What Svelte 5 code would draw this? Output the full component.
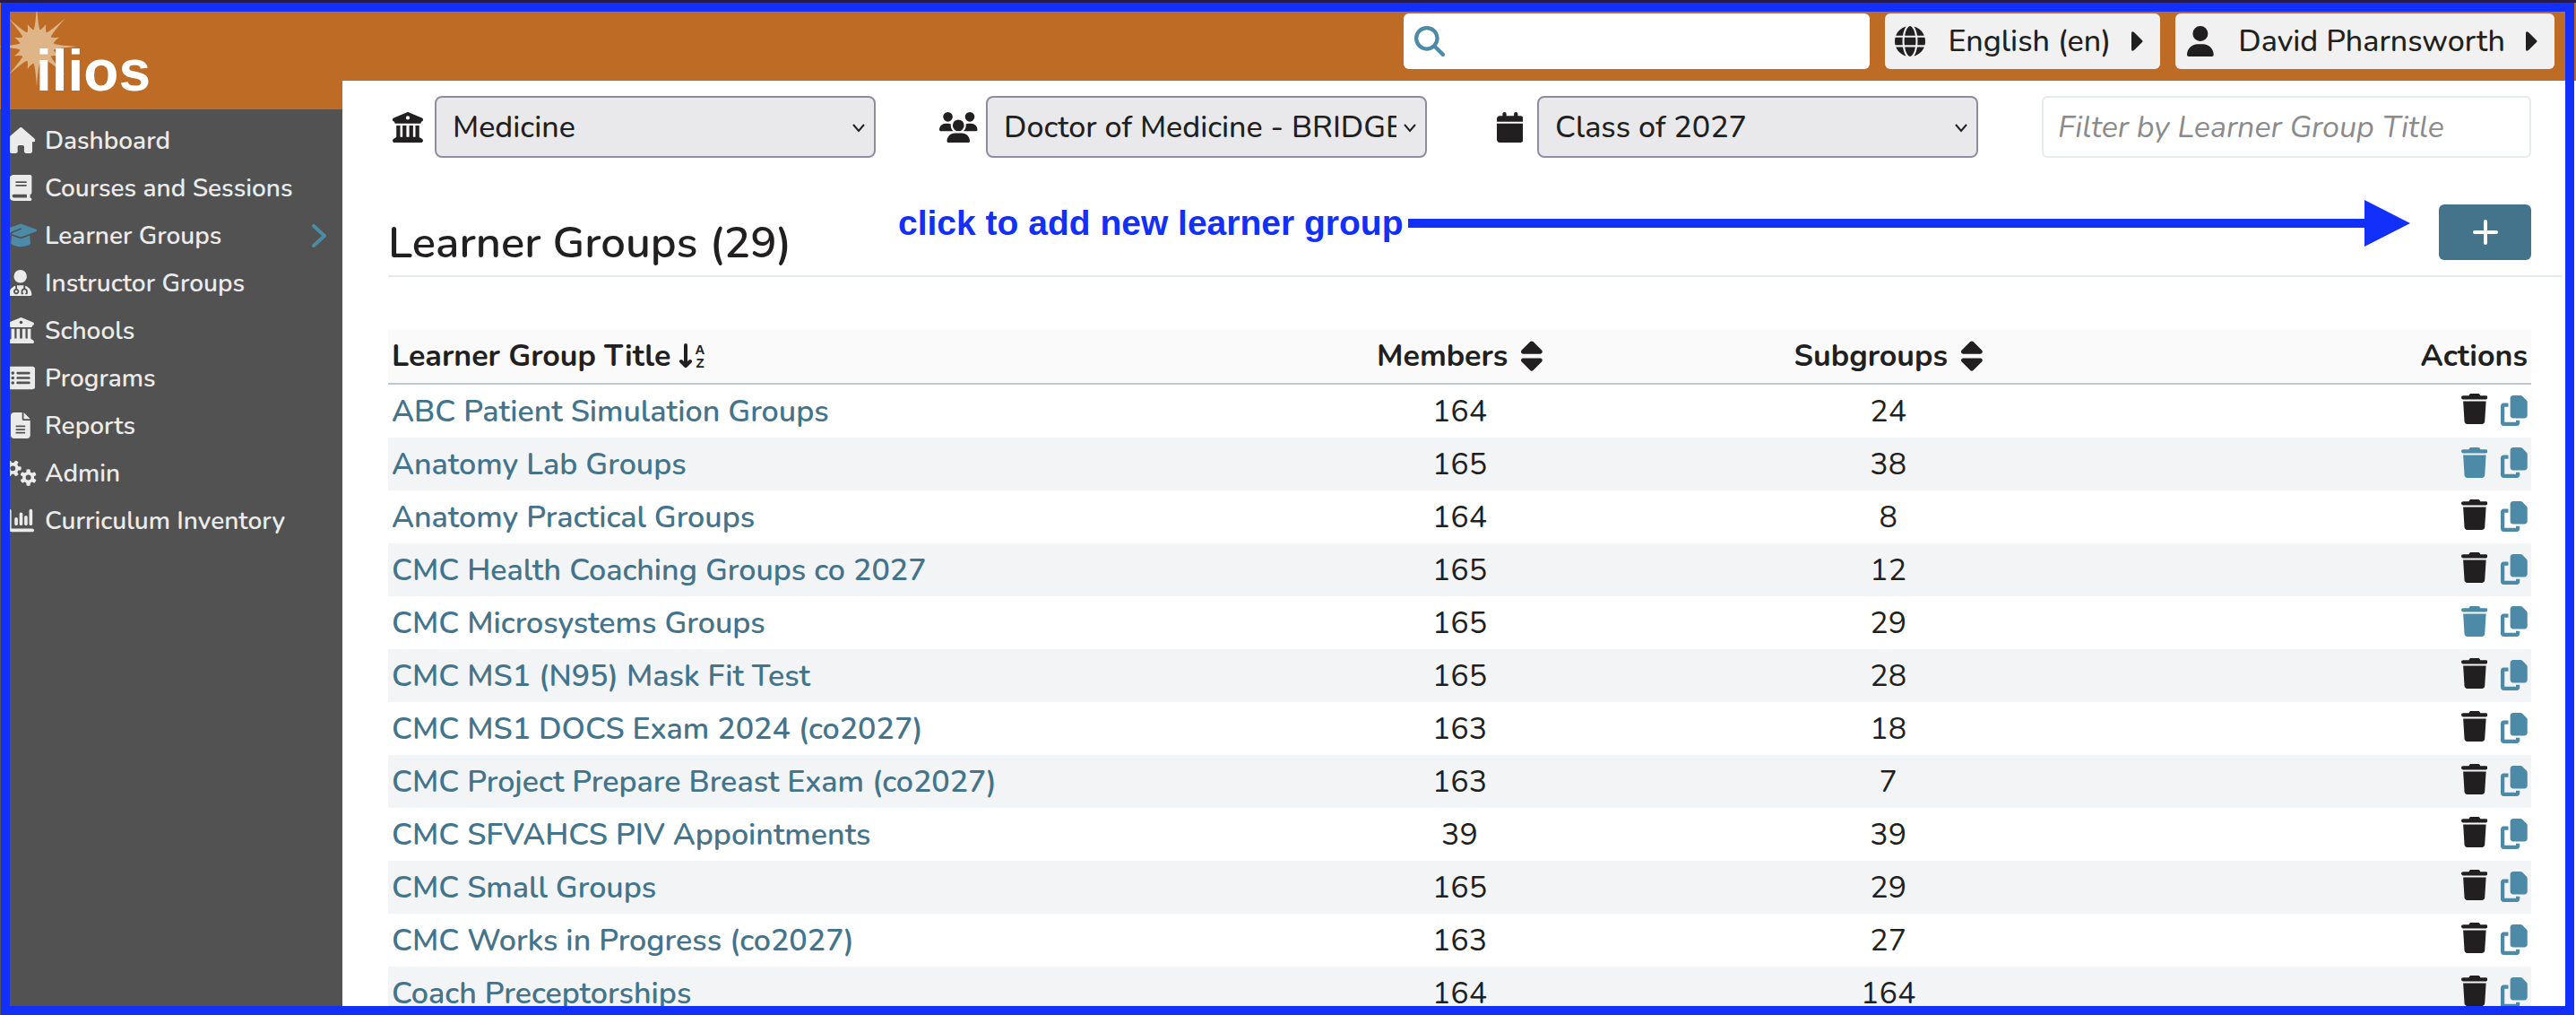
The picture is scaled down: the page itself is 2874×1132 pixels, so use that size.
<script>
  const icons = {
    home: [576, 'M575.8 255.5c0 18-15 32.1-32 32.1h-32l.7 160.2c0 2.7-.2 5.4-.5 8.1V472c0 22.1-17.9 40-40 40H456c-1.1 0-2.2 0-3.3-.1c-1.4 .1-2.8 .1-4.2 .1H416 392c-22.1 0-40-17.9-40-40V448 384c0-17.7-14.3-32-32-32H256c-17.7 0-32 14.3-32 32v64 24c0 22.1-17.9 40-40 40H160 128.1c-1.5 0-3-.1-4.5-.2c-1.2 .1-2.4 .2-3.6 .2H104c-22.1 0-40-17.9-40-40V360c0-.9 0-1.9 .1-2.8V287.6H32c-18 0-32-14-32-32.1c0-9 3-17 10-24L266.4 8c7-7 15-8 22-8s15 2 21 7L564.8 231.5c8 7 12 15 11 24z'],
    book: [448, 'M96 0C43 0 0 43 0 96V416c0 53 43 96 96 96H384h32c17.7 0 32-14.3 32-32s-14.3-32-32-32V384c17.7 0 32-14.3 32-32V32c0-17.7-14.3-32-32-32H384 96zm0 384H352v64H96c-17.7 0-32-14.3-32-32s14.3-32 32-32zm32-240c0-8.8 7.2-16 16-16H336c8.8 0 16 7.2 16 16s-7.2 16-16 16H144c-8.8 0-16-7.2-16-16zm16 48H336c8.8 0 16 7.2 16 16s-7.2 16-16 16H144c-8.8 0-16-7.2-16-16s7.2-16 16-16z'],
    cap: [640, 'M320 32c-8.1 0-16.1 1.4-23.7 4.1L15.8 137.4C6.3 140.9 0 149.9 0 160s6.3 19.1 15.8 22.6l57.9 20.9C57.3 229.3 48 259.8 48 291.9v28.1c0 28.4-10.8 57.7-22.3 80.8c-6.5 13-13.9 25.8-22.5 37.6C0 442.7-.9 448.3 .9 453.4s6 8.9 11.2 10.2l64 16c4.2 1.1 8.7 .3 12.4-2s6.3-6.1 7.1-10.4c8.6-42.8 4.3-81.2-2.1-108.7C90.3 344.3 86 329.8 80 316.5V291.9c0-30.2 10.2-58.7 27.9-81.5c12.9-15.5 29.6-28 49.2-35.7l157-61.7c8.2-3.2 17.5 .8 20.7 9s-.8 17.5-9 20.7l-157 61.7c-12.4 4.9-23.3 12.4-32.2 21.6l159.6 57.6c7.6 2.7 15.6 4.1 23.7 4.1s16.1-1.4 23.7-4.1L624.2 182.6c9.5-3.4 15.8-12.5 15.8-22.6s-6.3-19.1-15.8-22.6L343.7 36.1C336.1 33.4 328.1 32 320 32zM128 408c0 35.3 86 72 192 72s192-36.7 192-72L496.7 262.6 354.5 314c-11.1 4-22.8 6-34.5 6s-23.5-2-34.5-6L143.3 262.6 128 408z'],
    doctor: [448, 'M224 256a128 128 0 1 0 0-256 128 128 0 1 0 0 256zm-96 55.2C54 332.9 0 401.3 0 482.3C0 498.7 13.3 512 29.7 512H418.3c16.4 0 29.7-13.3 29.7-29.7c0-81-54-149.4-128-171.1V362c27.6 7.1 48 32.2 48 62v40c0 8.8-7.2 16-16 16H336c-8.8 0-16-7.2-16-16s7.2-16 16-16V424c0-17.7-14.3-32-32-32s-32 14.3-32 32v24c8.8 0 16 7.2 16 16s-7.2 16-16 16H256c-8.8 0-16-7.2-16-16V424c0-29.8 20.4-54.9 48-62V304.9c-6-.6-12.1-.9-18.3-.9H178.3c-6.2 0-12.3 .3-18.3 .9v65.4c23.1 6.9 40 28.3 40 53.7c0 30.9-25.1 56-56 56s-56-25.1-56-56c0-25.4 16.9-46.8 40-53.7V311.2zM144 448a24 24 0 1 0 0-48 24 24 0 1 0 0 48z'],
    school: [512, 'M243.4 2.6l-224 96c-14 6-21.8 21-18.7 35.8S16.8 160 32 160v8c0 13.3 10.7 24 24 24H456c13.3 0 24-10.7 24-24v-8c15.2 0 28.3-10.7 31.3-25.6s-4.8-29.9-18.7-35.8l-224-96c-8-3.4-17.2-3.4-25.2 0zM128 224H64V420.3c-.6 .3-1.2 .7-1.8 1.1l-48 32c-11.7 7.8-17 22.4-12.9 35.9S17.9 512 32 512H480c14.1 0 26.5-9.2 30.6-22.7s-1.1-28.1-12.9-35.9l-48-32c-.6-.4-1.2-.7-1.8-1.1V224H384V416H344V224H280V416H232V224H168V416H128V224zM256 64a32 32 0 1 1 0 64 32 32 0 1 1 0-64z'],
    list: [576, 'M0 96C0 60.7 28.7 32 64 32H512c35.3 0 64 28.7 64 64V416c0 35.3-28.7 64-64 64H64c-35.3 0-64-28.7-64-64V96zM128 288a32 32 0 1 0 0-64 32 32 0 1 0 0 64zm32-128a32 32 0 1 0 -64 0 32 32 0 1 0 64 0zM128 384a32 32 0 1 0 0-64 32 32 0 1 0 0 64zm96-248c-13.3 0-24 10.7-24 24s10.7 24 24 24H448c13.3 0 24-10.7 24-24s-10.7-24-24-24H224zm0 96c-13.3 0-24 10.7-24 24s10.7 24 24 24H448c13.3 0 24-10.7 24-24s-10.7-24-24-24H224zm0 96c-13.3 0-24 10.7-24 24s10.7 24 24 24H448c13.3 0 24-10.7 24-24s-10.7-24-24-24H224z'],
    file: [384, 'M64 0C28.7 0 0 28.7 0 64V448c0 35.3 28.7 64 64 64H320c35.3 0 64-28.7 64-64V160H256c-17.7 0-32-14.3-32-32V0H64zM256 0V128H384L256 0zM112 256H272c8.8 0 16 7.2 16 16s-7.2 16-16 16H112c-8.8 0-16-7.2-16-16s7.2-16 16-16zm0 64H272c8.8 0 16 7.2 16 16s-7.2 16-16 16H112c-8.8 0-16-7.2-16-16s7.2-16 16-16zm0 64H272c8.8 0 16 7.2 16 16s-7.2 16-16 16H112c-8.8 0-16-7.2-16-16s7.2-16 16-16z'],
    gears: [640, gear(165, 165, 0) + gear(470, 345, Math.PI / 6)],
    chart: [512, 'M32 32c17.7 0 32 14.3 32 32V400c0 8.8 7.2 16 16 16H480c17.7 0 32 14.3 32 32s-14.3 32-32 32H80c-44.2 0-80-35.8-80-80V64C0 46.3 14.3 32 32 32zM160 192c17.7 0 32 14.3 32 32v96c0 17.7-14.3 32-32 32s-32-14.3-32-32V224c0-17.7 14.3-32 32-32zm128-64V320c0 17.7-14.3 32-32 32s-32-14.3-32-32V128c0-17.7 14.3-32 32-32s32 14.3 32 32zm64 32c17.7 0 32 14.3 32 32v128c0 17.7-14.3 32-32 32s-32-14.3-32-32V192c0-17.7 14.3-32 32-32zM480 64V320c0 17.7-14.3 32-32 32s-32-14.3-32-32V64c0-17.7 14.3-32 32-32s32 14.3 32 32z'],
    search: [512, 'M416 208c0 45.9-14.9 88.3-40 122.7L502.6 457.4c12.5 12.5 12.5 32.8 0 45.3s-32.8 12.5-45.3 0L330.7 376c-34.4 25.2-76.8 40-122.7 40C93.1 416 0 322.9 0 208S93.1 0 208 0S416 93.1 416 208zM208 352a144 144 0 1 0 0-288 144 144 0 1 0 0 288z'],
    globe: [512, 'M352 256c0 22.2-1.2 43.6-3.3 64H163.3c-2.2-20.4-3.3-41.8-3.3-64s1.2-43.6 3.3-64H348.7c2.2 20.4 3.3 41.8 3.3 64zm28.8-64H503.9c5.3 20.5 8.1 41.9 8.1 64s-2.8 43.5-8.1 64H380.8c2.1-20.6 3.2-42 3.2-64s-1.1-43.4-3.2-64zm112.6-32H376.7c-10-63.9-29.8-117.4-55.3-151.6c78.3 20.7 142 77.5 171.9 151.6zm-149.1 0H167.7c6.1-36.4 15.5-68.6 27-94.7c10.5-23.6 22.2-40.7 33.5-51.5C239.4 3.2 248.7 0 256 0s16.6 3.2 27.8 13.8c11.3 10.8 23 27.9 33.5 51.5c11.6 26 20.9 58.2 27 94.7zm-209 0H18.6C48.6 85.9 112.2 29.1 190.6 8.4C165.1 42.6 145.3 96.1 135.3 160zM8.1 192H131.2c-2.1 20.6-3.2 42-3.2 64s1.1 43.4 3.2 64H8.1C2.8 299.5 0 278.1 0 256s2.8-43.5 8.1-64zM194.7 446.6c-11.6-26-20.9-58.2-27-94.6H344.3c-6.1 36.4-15.5 68.6-27 94.6c-10.5 23.6-22.2 40.7-33.5 51.5C272.6 508.8 263.3 512 256 512s-16.6-3.2-27.8-13.8c-11.3-10.8-23-27.9-33.5-51.5zM135.3 352c10 63.9 29.8 117.4 55.3 151.6C112.2 482.9 48.6 426.1 18.6 352H135.3zm358.1 0c-30 74.1-93.6 130.9-171.9 151.6c25.5-34.2 45.2-87.7 55.3-151.6H493.4z'],
    user: [448, 'M224 256A128 128 0 1 0 224 0a128 128 0 1 0 0 256zm-45.7 48C79.8 304 0 383.8 0 482.3C0 498.7 13.3 512 29.7 512H418.3c16.4 0 29.7-13.3 29.7-29.7C448 383.8 368.2 304 269.7 304H178.3z'],
    users: [640, 'M144 0a80 80 0 1 1 0 160A80 80 0 1 1 144 0zM512 0a80 80 0 1 1 0 160A80 80 0 1 1 512 0zM0 298.7C0 239.8 47.8 192 106.7 192h42.7c15.9 0 31 3.5 44.6 9.7c-1.3 7.2-1.9 14.7-1.9 22.3c0 38.2 16.8 72.5 43.3 96c-.2 0-.4 0-.7 0H21.3C9.6 320 0 310.4 0 298.7zM405.3 320c-.2 0-.4 0-.7 0c26.6-23.5 43.3-57.8 43.3-96c0-7.6-.7-15-1.9-22.3c13.6-6.3 28.7-9.7 44.6-9.7h42.7C592.2 192 640 239.8 640 298.7c0 11.8-9.6 21.3-21.3 21.3H405.3zM224 224a96 96 0 1 1 192 0 96 96 0 1 1 -192 0zM128 485.3C128 411.7 187.7 352 261.3 352H378.7C452.3 352 512 411.7 512 485.3c0 14.7-11.9 26.7-26.7 26.7H154.7c-14.7 0-26.7-11.9-26.7-26.7z'],
    calendar: [448, 'M96 32V64H48C21.5 64 0 85.5 0 112v48H448V112c0-26.5-21.5-48-48-48H352V32c0-17.7-14.3-32-32-32s-32 14.3-32 32V64H160V32c0-17.7-14.3-32-32-32S96 14.3 96 32zM448 192H0V464c0 26.5 21.5 48 48 48H400c26.5 0 48-21.5 48-48V192z'],
    trash: [448, 'M135.2 17.7L128 32H32C14.3 32 0 46.3 0 64S14.3 96 32 96H416c17.7 0 32-14.3 32-32s-14.3-32-32-32H320l-7.2-14.3C307.4 6.8 296.3 0 284.2 0H163.8c-12.1 0-23.2 6.8-28.6 17.7zM416 128H32L53.2 467c1.6 25.3 22.6 45 47.9 45H346.9c25.3 0 46.3-19.7 47.9-45L416 128z'],
    copy: [448, 'M208 0H332.1c12.7 0 24.9 5.1 33.9 14.1l67.9 67.9c9 9 14.1 21.2 14.1 33.9V336c0 26.5-21.5 48-48 48H208c-26.5 0-48-21.5-48-48V48c0-26.5 21.5-48 48-48zM48 128h80v64H64V448H256V416h64v48c0 26.5-21.5 48-48 48H48c-26.5 0-48-21.5-48-48V176c0-26.5 21.5-48 48-48z'],
    sort: [320, 'M137.4 41.4c12.5-12.5 32.8-12.5 45.3 0l128 128c9.2 9.2 11.9 22.9 6.9 34.9s-16.6 19.8-29.6 19.8H32c-12.9 0-24.6-7.8-29.6-19.8s-2.2-25.7 6.9-34.9l128-128zm0 429.3l-128-128c-9.2-9.2-11.9-22.9-6.9-34.9s16.6-19.8 29.6-19.8H288c12.9 0 24.6 7.8 29.6 19.8s2.2 25.7-6.9 34.9l-128 128c-12.5 12.5-32.8 12.5-45.3 0z']
  };

  function polar(cx, cy, r, a) {
    return `${(cx + r * Math.cos(a)).toFixed(1)} ${(cy + r * Math.sin(a)).toFixed(1)}`;
  }

  // Six-toothed wheel with a round hole.
  function gear(cx, cy, turn) {
    const step = Math.PI / 3;
    let d = '';
    for (let i = 0; i < 6; i++) {
      const a = turn + i * step;
      d += `${i ? 'L' : 'M'}${polar(cx, cy, 115, a - 0.34)}L${polar(cx, cy, 160, a - 0.24)}`;
      d += `Q${polar(cx, cy, 176, a)} ${polar(cx, cy, 160, a + 0.24)}L${polar(cx, cy, 115, a + 0.34)}`;
    }
    return d + `ZM${cx - 52} ${cy}a52 52 0 1 0 104 0a52 52 0 1 0 -104 0z`;
  }

  // Sunburst: eight long rays with a short spike between each two.
  function burst(cx, cy) {
    let d = '';
    for (let i = 0; i < 16; i++) {
      const a = (i * Math.PI) / 8;
      const tip = i % 2 ? 27 : 45;
      const half = Math.PI / 16;
      d += `${i ? 'L' : 'M'}${polar(cx, cy, 19, a - half)}Q${polar(cx, cy, 21, a - 0.08)} ${polar(cx, cy, tip, a)}`;
      d += `Q${polar(cx, cy, 21, a + 0.08)} ${polar(cx, cy, 19, a + half)}`;
    }
    return d + 'Z';
  }

  const nav = [
    ['home', 'Dashboard'],
    ['book', 'Courses and Sessions'],
    ['cap', 'Learner Groups'],
    ['doctor', 'Instructor Groups'],
    ['school', 'Schools'],
    ['list', 'Programs'],
    ['file', 'Reports'],
    ['gears', 'Admin'],
    ['chart', 'Curriculum Inventory']
  ];

  const filters = [
    ['school', 'School', 'Medicine'],
    ['users', 'Program', 'Doctor of Medicine - BRIDGES'],
    ['calendar', 'Cohort', 'Class of 2027']
  ];

  const groups = [
    ['ABC Patient Simulation Groups', 164, 24, false],
    ['Anatomy Lab Groups', 165, 38, true],
    ['Anatomy Practical Groups', 164, 8, false],
    ['CMC Health Coaching Groups co 2027', 165, 12, false],
    ['CMC Microsystems Groups', 165, 29, true],
    ['CMC MS1 (N95) Mask Fit Test', 165, 28, false],
    ['CMC MS1 DOCS Exam 2024 (co2027)', 163, 18, false],
    ['CMC Project Prepare Breast Exam (co2027)', 163, 7, false],
    ['CMC SFVAHCS PIV Appointments', 39, 39, false],
    ['CMC Small Groups', 165, 29, false],
    ['CMC Works in Progress (co2027)', 163, 27, false],
    ['Coach Preceptorships', 164, 164, false]
  ];
</script>

{#snippet icon(name)}
  <svg class="icon" viewBox="0 0 {icons[name][0]} 512" aria-hidden="true"><path fill-rule="evenodd" d={icons[name][1]} /></svg>
{/snippet}

{#snippet caret()}
  <svg class="caret" viewBox="0 0 13 22" aria-hidden="true"><path d="M0 2Q0-1 3 1L12 10Q13 11 12 12L3 21Q0 23 0 20Z" /></svg>
{/snippet}

<div class="app">
  <aside class="sidebar">
    <a class="logo" href="#home" aria-label="ilios">
      <svg class="burst" viewBox="0 0 90 92" aria-hidden="true"><path d={burst(41, 46)} /></svg>
      <span class="wordmark">ilios</span>
    </a>
    <nav>
      {#each nav as [name, label]}
        <a class="nav-item" class:active={name === 'cap'} href="#{name}">
          <span class="nav-icon">{@render icon(name)}</span>
          <span class="nav-label">{label}</span>
          {#if name === 'cap'}
            <svg class="chevron" viewBox="0 0 16 26" aria-hidden="true"><path d="M2 2L14 13L2 24" /></svg>
          {/if}
        </a>
      {/each}
    </nav>
  </aside>

  <div class="page">
    <header>
      <label class="search">
        {@render icon('search')}
        <input type="search" aria-label="Search" />
      </label>
      <button class="menu">
        <span class="menu-icon">{@render icon('globe')}</span>
        <span>English (en)</span>
        {@render caret()}
      </button>
      <button class="menu">
        <span class="menu-icon">{@render icon('user')}</span>
        <span>David Pharnsworth</span>
        {@render caret()}
      </button>
    </header>

    <main>
      <div class="filters">
        {#each filters as [name, label, value]}
          <label class="filter">
            <span class="filter-icon">{@render icon(name)}</span>
            <span class="select-box">
              <select aria-label={label}><option>{value}</option></select>
              <svg class="drop" viewBox="0 0 16 10" aria-hidden="true"><path d="M2 1L8 8L14 1" /></svg>
            </span>
          </label>
        {/each}
        <input class="title-filter" type="text" aria-label="Filter by Learner Group Title" placeholder="Filter by Learner Group Title" />
      </div>

      <div class="title-row">
        <h2>Learner Groups (29)</h2>
        <div class="note">
          <span>click to add new learner group</span>
          <span class="shaft"></span>
          <svg class="head" viewBox="0 0 51 52" aria-hidden="true"><path d="M0 0L51 26L0 52Z" /></svg>
        </div>
        <button class="add" aria-label="Add learner group">
          <svg viewBox="0 0 28 28" aria-hidden="true"><path d="M14 2V26M2 14H26" /></svg>
        </button>
      </div>

      <table>
        <thead>
          <tr>
            <th class="name">
              <button class="sort">Learner Group Title
                <svg class="alpha" viewBox="0 0 34 38" aria-hidden="true">
                  <path d="M7 7V29M2 25L7 30L12 25" />
                  <text x="23" y="17">A</text>
                  <text x="23" y="32">Z</text>
                </svg>
              </button>
            </th>
            <th class="count"><button class="sort">Members <span class="arrows">{@render icon('sort')}</span></button></th>
            <th class="count"><button class="sort">Subgroups <span class="arrows">{@render icon('sort')}</span></button></th>
            <th class="actions">Actions</th>
          </tr>
        </thead>
        <tbody>
          {#each groups as [title, members, subgroups, removable]}
            <tr>
              <td class="name"><a href="#group">{title}</a></td>
              <td class="count">{members}</td>
              <td class="count">{subgroups}</td>
              <td class="actions">
                <div class="tools">
                  <button class="tool" class:locked={!removable} disabled={!removable} aria-label="Remove {title}">{@render icon('trash')}</button>
                  <button class="tool" aria-label="Copy {title}">{@render icon('copy')}</button>
                </div>
              </td>
            </tr>
          {/each}
        </tbody>
      </table>
    </main>
  </div>

  <div class="frame"></div>
</div>

<style>
  :global(body) {
    margin: 0;
    background: #fff;
  }
  .app {
    position: relative;
    display: grid;
    grid-template-columns: 382px minmax(0, 1fr);
    height: 100vh;
    box-sizing: border-box;
    overflow: hidden;
    border-top: 3px solid #261a4c;
    color: #211f20;
    font: 34px Nunito, Lato, sans-serif;
  }
  .app *,
  .app *::before {
    box-sizing: border-box;
  }
  button,
  input,
  select {
    font: inherit;
    color: inherit;
    margin: 0;
  }
  button {
    display: flex;
    align-items: center;
    padding: 0;
    border: 0;
    background: none;
  }
  a {
    text-decoration: none;
  }
  .icon {
    display: block;
    height: 34px;
    fill: currentColor;
  }

  .sidebar {
    background: #525252;
    font-size: 28px;
    font-weight: 600;
  }
  .logo {
    position: relative;
    display: block;
    height: 119px;
    padding: 39px 0 0 40px;
    background: #be6b26;
    color: #fff;
  }
  .burst {
    position: absolute;
    left: 0;
    top: 3px;
    width: 90px;
    height: 92px;
    fill: #dfb587;
  }
  .wordmark {
    position: relative;
    font: bold 64px/74px 'Liberation Sans', Arial, sans-serif;
  }
  nav {
    padding: 8px 18px 0 8px;
  }
  .nav-item {
    display: flex;
    align-items: center;
    gap: 12px;
    height: 53px;
    color: #ebebeb;
  }
  .nav-icon {
    display: flex;
    justify-content: center;
    width: 30px;
  }
  .nav-icon .icon {
    height: 29px;
    flex: none;
  }
  .nav-label {
    flex: 1;
    white-space: nowrap;
  }
  .active .nav-icon,
  .chevron {
    color: #4d8aa8;
  }
  .chevron {
    width: 16px;
    height: 26px;
    fill: none;
    stroke: currentColor;
    stroke-width: 4;
    stroke-linecap: round;
    stroke-linejoin: round;
  }

  .page {
    min-width: 0;
    background: #fff;
  }
  header {
    display: flex;
    justify-content: flex-end;
    gap: 17px;
    height: 87px;
    padding: 12px 24px 13px 0;
    background: #be6b26;
  }
  .search {
    display: flex;
    align-items: center;
    gap: 12px;
    width: 520px;
    padding: 0 12px;
    border-radius: 6px;
    background: #fff;
    color: #4d8aa8;
  }
  .search input {
    flex: 1;
    min-width: 0;
    border: 0;
    outline: 0;
    background: none;
  }
  .menu {
    padding: 0 19px 0 11px;
    border-radius: 6px;
    background: #f1f1f1;
    font-weight: 500;
    white-space: nowrap;
  }
  .menu-icon {
    display: flex;
    justify-content: center;
    width: 34px;
    margin-right: 25px;
  }
  .caret {
    width: 13px;
    height: 22px;
    margin-left: 23px;
    fill: currentColor;
  }

  main {
    padding: 17px 15px 0 51px;
  }
  .filters {
    display: grid;
    grid-template-columns: repeat(3, minmax(0, 615fr)) minmax(0, 546fr);
    height: 69px;
    padding-right: 35px;
  }
  .filter {
    display: flex;
    align-items: center;
    gap: 9px;
    padding-right: 71px;
  }
  .filter-icon {
    display: flex;
    justify-content: center;
    flex: none;
    width: 43px;
  }
  .select-box {
    position: relative;
    flex: 1;
    min-width: 0;
    height: 100%;
  }
  select {
    width: 100%;
    height: 100%;
    padding: 0 32px 0 18px;
    appearance: none;
    border: 2px solid #8f8d9d;
    border-radius: 8px;
    background: #e9e9ec;
    font-weight: 500;
  }
  .drop {
    position: absolute;
    right: 11px;
    top: 31px;
    width: 16px;
    height: 10px;
    fill: none;
    stroke: #211f20;
    stroke-width: 2;
    pointer-events: none;
  }
  .title-filter {
    width: 100%;
    height: 100%;
    padding: 0 16px;
    border: 2px solid #e6ecec;
    border-radius: 6px;
    background: #fff;
  }
  .title-filter::placeholder {
    color: #8b8b8b;
    font-style: italic;
    opacity: 1;
  }

  .title-row {
    display: grid;
    grid-template-columns: 569px minmax(0, 1fr) 103px;
    align-items: start;
    margin-top: 52px;
    padding: 0 35px 17px 0;
    border-bottom: 2px solid #e6ecec;
  }
  h2 {
    margin: 0;
    padding-top: 12px;
    font: 600 49px/62px Nunito, Lato, sans-serif;
    height: 62px;
  }
  .note {
    display: flex;
    align-items: center;
    height: 42px;
    padding-right: 32px;
    color: #1230fa;
    font: bold 39px 'Liberation Sans', Arial, sans-serif;
    white-space: nowrap;
  }
  .shaft {
    flex: 1;
    height: 10px;
    margin-left: 6px;
    background: currentColor;
  }
  .head {
    width: 51px;
    height: 52px;
    fill: currentColor;
  }
  .add {
    justify-content: center;
    height: 62px;
    border-radius: 6px;
    background: #43748b;
  }
  .add svg {
    width: 28px;
    height: 28px;
    fill: none;
    stroke: #fff;
    stroke-width: 4;
    stroke-linecap: round;
  }

  table {
    width: calc(100% - 35px);
    margin-top: 58px;
    border-spacing: 0;
    table-layout: fixed;
  }
  th,
  td {
    height: 59px;
    padding: 0 4px;
    text-align: center;
    white-space: nowrap;
  }
  th {
    height: 62px;
    background: #fafafa;
    border-bottom: 2px solid #bfc7ca;
    font-weight: 700;
  }
  .name {
    width: 40%;
    text-align: left;
  }
  .count {
    width: 20%;
  }
  .actions {
    width: 20%;
    text-align: right;
  }
  .name a {
    color: #43748b;
    font-weight: 600;
  }
  tbody tr:nth-child(even) {
    background: #f3f4f6;
  }
  .sort {
    display: inline-flex;
  }
  .arrows .icon {
    height: 38px;
    margin-left: 15px;
  }
  .alpha {
    width: 34px;
    height: 38px;
    margin-left: 10px;
    overflow: visible;
    fill: none;
    stroke: currentColor;
    stroke-width: 4;
    stroke-linecap: round;
    stroke-linejoin: round;
  }
  .alpha text {
    fill: currentColor;
    stroke: none;
    font: 900 15px 'Liberation Sans', Arial, sans-serif;
    text-anchor: middle;
  }
  .tools {
    display: flex;
    justify-content: flex-end;
    align-items: flex-end;
    gap: 15px;
    padding-bottom: 4px;
  }
  .tool {
    color: #4d8aa8;
  }
  .locked {
    padding-bottom: 2px;
    color: #211f20;
  }

  .frame {
    position: absolute;
    inset: 0 2px 0 1px;
    border: 10px solid #1230fa;
    pointer-events: none;
  }
</style>
